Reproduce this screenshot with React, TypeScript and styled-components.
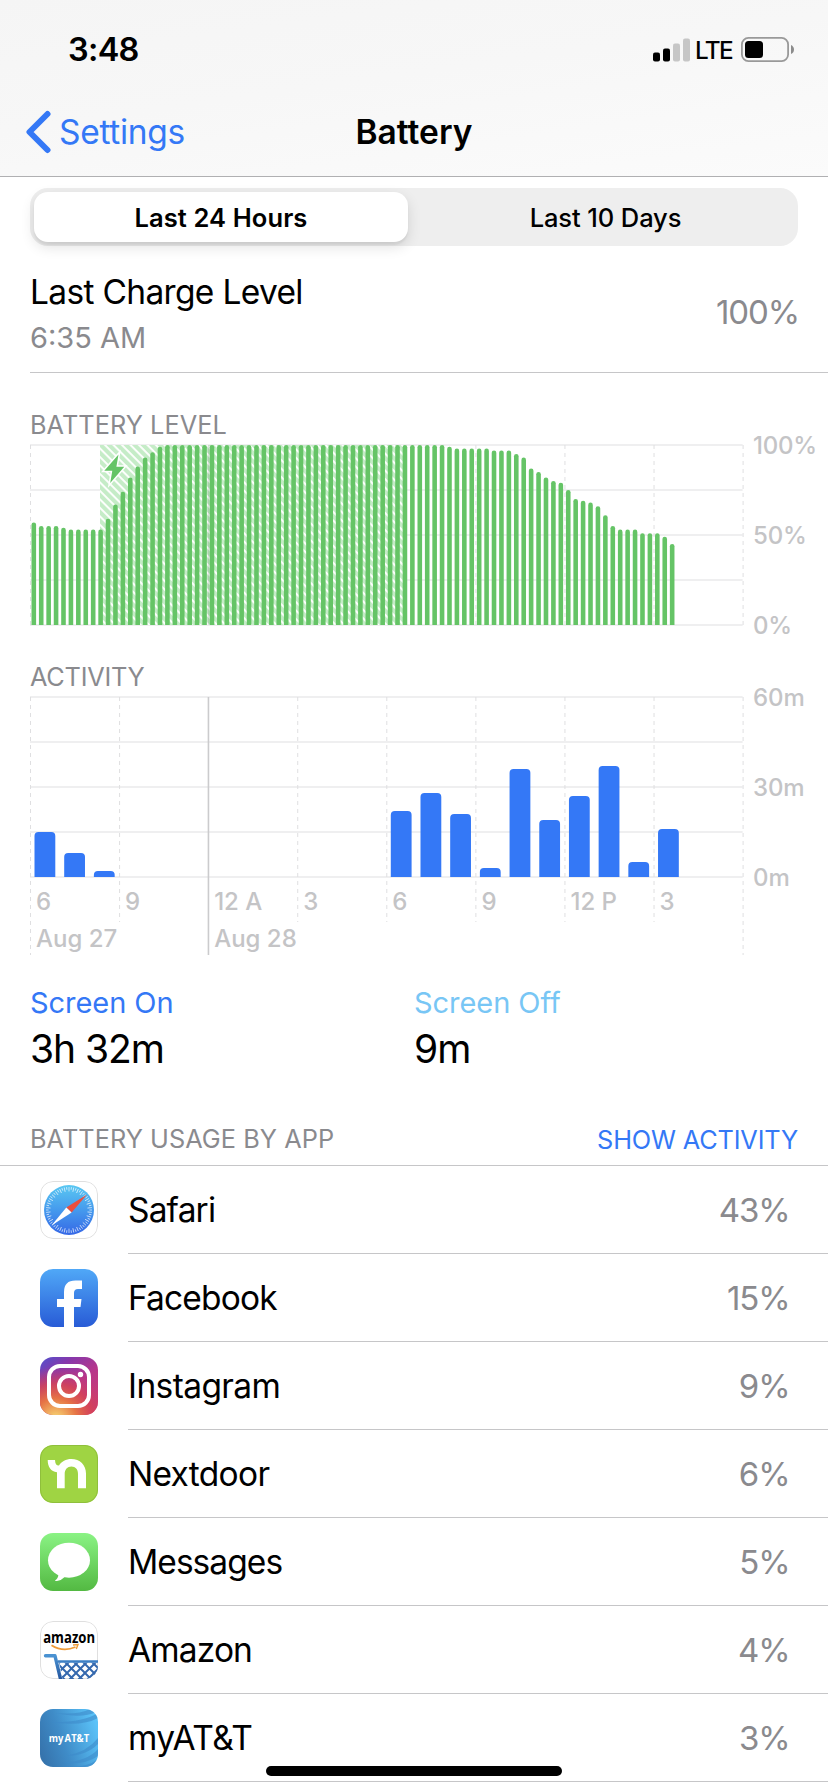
import React from 'react';
import styled, { createGlobalStyle } from 'styled-components';

const colors = {
  blue: '#3478f6',
  lightBlue: '#78c6f5',
  green: '#65c466',
  gray: '#8a8a8e',
  axis: '#c4c4c6',
  grid: '#efeff0',
  separator: '#c6c6c8',
};

const GlobalStyle = createGlobalStyle`
  * {
    box-sizing: border-box;
  }

  body {
    margin: 0;
    background: #fff;
    font-family: Inter, 'Liberation Sans', sans-serif;
    color: #000;
  }
`;

const Screen = styled.div`
  width: 828px;
  height: 1792px;
  overflow: hidden;
  position: relative;
  background: #fff;
`;

const Header = styled.header`
  height: 177px;
  background: linear-gradient(172deg, #f5f5f5 0%, #f7f7f7 45%, #fbfbfb 100%);
  border-bottom: 1px solid #b0b0b2;
`;

const StatusBar = styled.div`
  height: 88px;
  padding: 11px 34px 0 68px;
  display: flex;
  align-items: center;
  justify-content: space-between;
`;

const Time = styled.span`
  font-size: 32.5px;
  font-weight: 600;
  letter-spacing: -0.7px;
`;

const StatusIcons = styled.div`
  display: flex;
  align-items: center;
`;

const Carrier = styled.span`
  width: 50px;
  padding-left: 4px;
  font-size: 24.3px;
  font-weight: 500;
  letter-spacing: -1.7px;
`;

const NavBar = styled.nav`
  height: 88px;
  padding: 0 26px;
  display: grid;
  grid-template-columns: 1fr auto 1fr;
  align-items: center;
`;

const BackLink = styled.a`
  display: flex;
  align-items: center;
  gap: 8px;
  color: ${colors.blue};
  font-size: 33.5px;
  letter-spacing: -0.3px;
`;

const NavTitle = styled.h1`
  margin: 0;
  font-size: 33.5px;
  font-weight: 600;
`;

const Segments = styled.div`
  margin: 11px 30px 0;
  height: 58px;
  padding: 4px;
  display: grid;
  grid-template-columns: 374px 1fr;
  gap: 9px;
  border-radius: 18px;
  background: #eeeeee;
`;

const Segment = styled.button<{ $active?: boolean }>`
  border: 0;
  padding: 0;
  border-radius: 14px;
  font-family: inherit;
  font-size: 25.5px;
  color: #000;
  font-weight: ${({ $active }) => ($active ? 600 : 500)};
  letter-spacing: ${({ $active }) => ($active ? '0.1px' : '-0.1px')};
  background: ${({ $active }) => ($active ? '#fff' : 'transparent')};
  box-shadow: ${({ $active }) =>
    $active ? '0 5px 14px rgba(0, 0, 0, 0.12), 0 3px 2px rgba(0, 0, 0, 0.05)' : 'none'};
`;

const ChargeRow = styled.section`
  height: 127px;
  margin-left: 30px;
  padding: 5px 29px 0 0;
  display: flex;
  align-items: center;
  justify-content: space-between;
  border-bottom: 1px solid ${colors.separator};
`;

const ChargeInfo = styled.div`
  padding-top: 6px;
`;

const ChargeTitle = styled.div`
  font-size: 33.5px;
  line-height: 46px;
  letter-spacing: -0.67px;
`;

const ChargeTime = styled.div`
  font-size: 29px;
  line-height: 45px;
  color: ${colors.gray};
`;

const Value = styled.span`
  font-size: 33px;
  letter-spacing: -1.1px;
  color: ${colors.gray};
`;

const SectionLabel = styled.h2<{ $spacing?: number }>`
  margin: 0;
  font-size: 25.3px;
  font-weight: 400;
  line-height: 32px;
  letter-spacing: ${({ $spacing = 0.05 }) => $spacing}px;
  color: ${colors.gray};
`;

const ChartSection = styled.section<{ $top: number }>`
  padding: ${({ $top }) => $top}px 0 0 30px;
`;

const ChartSvg = styled.svg`
  display: block;
  overflow: visible;

  text {
    font-size: 24px;
    font-weight: 500;
    fill: ${colors.axis};
  }
`;

const Totals = styled.section`
  height: 112px;
  padding: 0 30px;
  display: grid;
  grid-template-columns: 1fr 1fr;
`;

const TotalLabel = styled.div<{ $color: string }>`
  font-size: 29px;
  line-height: 40px;
  letter-spacing: -0.05px;
  color: ${({ $color }) => $color};
`;

const TotalValue = styled.div`
  font-size: 39px;
  line-height: 51px;
  letter-spacing: -1.05px;
`;

const UsageHeader = styled.div`
  height: 70px;
  padding: 18px 30px 0;
  display: flex;
  align-items: center;
  justify-content: space-between;
`;

const ShowActivity = styled.a`
  font-size: 25.3px;
  letter-spacing: -0.15px;
  color: ${colors.blue};
`;

const AppList = styled.ul`
  margin: 0;
  padding: 0;
  list-style: none;
  border-top: 1px solid ${colors.separator};
`;

const AppRow = styled.li`
  height: 88px;
  padding-left: 40px;
  display: flex;
  align-items: center;
`;

const AppBody = styled.div`
  flex: 1;
  height: 88px;
  margin-left: 30px;
  padding-right: 38.5px;
  display: flex;
  align-items: center;
  justify-content: space-between;
  border-bottom: 1px solid ${colors.separator};
`;

const AppName = styled.span<{ $spacing: number }>`
  font-size: 33.5px;
  letter-spacing: ${({ $spacing }) => $spacing}px;
`;

const AppIcon = styled.svg`
  display: block;
  width: 58px;
  height: 58px;
  border-radius: 13px;
`;

const HomeIndicator = styled.div`
  position: absolute;
  left: 266px;
  bottom: 16px;
  width: 296px;
  height: 10px;
  border-radius: 5px;
  background: #000;
`;

const SignalIcon = () => (
  <svg width="38" height="24" viewBox="0 0 38 24">
    <rect x="0" y="14.5" width="7" height="9" rx="2" />
    <rect x="10" y="10.5" width="7" height="13" rx="2" />
    <rect x="20" y="5.5" width="7" height="18" rx="2" fill="#c6c6c6" />
    <rect x="30" y="0.5" width="7" height="23" rx="2" fill="#c6c6c6" />
  </svg>
);

const BatteryIcon = () => (
  <svg width="53" height="25" viewBox="0 0 53 25">
    <rect x="0.9" y="0.9" width="46.2" height="23.2" rx="6.5" fill="none" stroke="#999" strokeWidth="1.8" />
    <rect x="4" y="4" width="18" height="17" rx="3.5" />
    <path d="M50 8 Q53 9.5 53 12.5 Q53 15.5 50 17 Z" fill="#8c8c8c" />
  </svg>
);

const SafariIcon = () => (
  <AppIcon viewBox="0 0 58 58">
    <defs>
      <linearGradient id="safari" x1="0" y1="0" x2="0" y2="1">
        <stop offset="0" stopColor="#5ac8f2" />
        <stop offset="0.5" stopColor="#459aed" />
        <stop offset="1" stopColor="#3567e6" />
      </linearGradient>
    </defs>
    <rect x="0.5" y="0.5" width="57" height="57" rx="12.5" fill="#fff" stroke="#dfdfdf" />
    <circle cx="29" cy="29" r="25" fill="url(#safari)" />
    {Array.from({ length: 60 }, (_, i) => (
      <line
        key={i}
        x1="29"
        y1="6"
        x2="29"
        y2={i % 2 ? 8.6 : 10.4}
        stroke="#fff"
        strokeOpacity="0.8"
        strokeWidth="0.8"
        transform={`rotate(${i * 6} 29 29)`}
      />
    ))}
    <path d="M47 13.5 L26.3 26.4 L31.6 31.6 Z" fill="#ea4e3d" />
    <path d="M11.5 44.5 L26.3 26.4 L31.6 31.6 Z" fill="#fff" />
  </AppIcon>
);

const FacebookIcon = () => (
  <AppIcon viewBox="0 0 58 58">
    <defs>
      <linearGradient id="facebook" x1="0" y1="0" x2="0" y2="1">
        <stop offset="0" stopColor="#50a8f7" />
        <stop offset="1" stopColor="#285bd6" />
      </linearGradient>
    </defs>
    <rect width="58" height="58" fill="url(#facebook)" />
    <path
      d="M24 58 V38 H17 V30 H24 V23 Q24 11.5 35.5 11.5 H42 V20 H38 Q34 20 34 24 V30 H41.5 L40.5 38 H34 V58 Z"
      fill="#fff"
    />
  </AppIcon>
);

const InstagramIcon = () => (
  <AppIcon viewBox="0 0 58 58">
    <defs>
      <linearGradient id="insta" x1="0.1" y1="0" x2="0.9" y2="1">
        <stop offset="0" stopColor="#5a4dc8" />
        <stop offset="0.22" stopColor="#8538ac" />
        <stop offset="0.55" stopColor="#b8368a" />
        <stop offset="1" stopColor="#cf3f6c" />
      </linearGradient>
      <radialGradient id="instaWarm" cx="0.27" cy="1.08" r="0.92">
        <stop offset="0" stopColor="#f7d57c" />
        <stop offset="0.12" stopColor="#f3bf68" />
        <stop offset="0.4" stopColor="#e67445" />
        <stop offset="0.68" stopColor="#d64453" stopOpacity="0.8" />
        <stop offset="1" stopColor="#c8386f" stopOpacity="0" />
      </radialGradient>
    </defs>
    <rect width="58" height="58" fill="url(#insta)" />
    <rect width="58" height="58" fill="url(#instaWarm)" />
    <rect x="9" y="9" width="40" height="40" rx="11" fill="none" stroke="#fff" strokeWidth="4" />
    <circle cx="29" cy="29" r="10" fill="none" stroke="#fff" strokeWidth="4" />
    <circle cx="40.5" cy="17.5" r="2.7" fill="#fff" />
  </AppIcon>
);

const NextdoorIcon = () => (
  <AppIcon viewBox="0 0 58 58">
    <rect width="58" height="58" fill="#9fd443" />
    <rect x="0.5" y="0.5" width="57" height="57" rx="12.5" fill="none" stroke="#8fbf3c" />
    <path
      d="M7.7 15 H15 C15.2 19 16.5 20.7 19 20.5 C21.5 16.5 26 14 31.2 14 C40 14 46 20 46 28.5 V43.3 H38 V29 C38 24.3 35.5 21.5 31.4 21.5 C27.4 21.5 24.7 24.5 24.7 29 V43.3 H17 V27.3 C11 26.6 7.7 22 7.7 15 Z"
      fill="#fff"
    />
  </AppIcon>
);

const MessagesIcon = () => (
  <AppIcon viewBox="0 0 58 58">
    <defs>
      <linearGradient id="messages" x1="0" y1="0" x2="0" y2="1">
        <stop offset="0" stopColor="#8af384" />
        <stop offset="1" stopColor="#53b942" />
      </linearGradient>
    </defs>
    <rect width="58" height="58" fill="url(#messages)" />
    <ellipse cx="29" cy="27.2" rx="21" ry="17.5" fill="#fff" />
    <path d="M18.5 40 Q18.5 45.5 15 47.4 Q15.5 48.2 17 48 Q21.5 47.4 25 43.8 Z" fill="#fff" />
  </AppIcon>
);

const AmazonIcon = () => (
  <AppIcon viewBox="0 0 58 58">
    <defs>
      <linearGradient id="cart" x1="0" y1="0" x2="0" y2="1">
        <stop offset="0" stopColor="#4a92d2" />
        <stop offset="1" stopColor="#24569f" />
      </linearGradient>
      <pattern id="basket" width="9" height="9" x="18" y="43" patternUnits="userSpaceOnUse">
        <path d="M-1 -1 L10 10 M10 -1 L-1 10" stroke="#3468ae" strokeWidth="2" />
      </pattern>
    </defs>
    <rect x="0.5" y="0.5" width="57" height="57" rx="12.5" fill="#fff" stroke="#dfdfdf" />
    <text
      transform="translate(3.2 22.4) scale(0.83 1)"
      fontFamily="'Open Sans', sans-serif"
      fontWeight="700"
      fontSize="15.8"
    >
      amazon
    </text>
    <path d="M11.5 24.2 Q23 31.5 35.5 26" fill="none" stroke="#ee9b38" strokeWidth="1.8" />
    <path d="M33 24 L38 23.5 L36.3 28" fill="none" stroke="#ee9b38" strokeWidth="1.4" />
    <path d="M19 41.5 H58 V58 H22.5 Z" fill="url(#basket)" />
    <path d="M18 40.5 H58" stroke="#3c7fc4" strokeWidth="2.6" />
    <path d="M5.5 34.8 H15 L20.5 58" fill="none" stroke="url(#cart)" strokeWidth="3.4" strokeLinecap="round" strokeLinejoin="round" />
  </AppIcon>
);

const AttIcon = () => (
  <AppIcon viewBox="0 0 58 58">
    <defs>
      <linearGradient id="att" x1="0" y1="0.7" x2="1" y2="0.35">
        <stop offset="0" stopColor="#3674ad" />
        <stop offset="0.4" stopColor="#3f8cc8" />
        <stop offset="1" stopColor="#5ac2f8" />
      </linearGradient>
    </defs>
    <rect width="58" height="58" fill="url(#att)" />
    <g fill="#3d8aca" fillOpacity="0.6">
      <path d="M16 4 Q38 6 50 0 L56 3 Q42 10 16 4 Z" />
      <path d="M10 13 Q42 14 58 4 V9 Q42 18 10 13 Z" />
      <path d="M26 47 Q47 43 58 29 V35 Q46 47 26 47 Z" />
      <path d="M22 54 Q48 52 58 40 V47 Q46 56 22 54 Z" />
      <path d="M30 58 Q48 58 58 50 V58 Z" />
    </g>
    <text
      x="8.7"
      y="33"
      fill="#fff"
      fontFamily="'Open Sans', sans-serif"
      fontWeight="700"
      fontSize="11"
      wordSpacing="-1.4"
      textLength="40.5"
      lengthAdjust="spacingAndGlyphs"
    >
      my AT&amp;T
    </text>
  </AppIcon>
);

const apps = [
  { name: 'Safari', usage: '43%', spacing: -0.85, icon: <SafariIcon /> },
  { name: 'Facebook', usage: '15%', spacing: -0.85, icon: <FacebookIcon /> },
  { name: 'Instagram', usage: '9%', spacing: -0.6, icon: <InstagramIcon /> },
  { name: 'Nextdoor', usage: '6%', spacing: -0.7, icon: <NextdoorIcon /> },
  { name: 'Messages', usage: '5%', spacing: -0.95, icon: <MessagesIcon /> },
  { name: 'Amazon', usage: '4%', spacing: -0.85, icon: <AmazonIcon /> },
  { name: 'myAT&T', usage: '3%', spacing: -0.5, icon: <AttIcon /> },
];

// Battery charge, one sample every 15 minutes
const levels = [
  57, 55, 55, 55, 54, 53, 53, 53, 53, 53, 59, 67, 74, 82, 88, 93, 96, 99,
  ...Array(38).fill(100),
  99, 98, 98, 98, 98, 98, 97, 97, 97, 95, 93, 87, 85, 82, 80, 79, 75, 70, 69, 68, 66, 61, 55, 53, 53, 53, 51, 51, 51, 49, 45,
];

// Minutes of activity in each hour
const minutes = [15, 8, 2, 0, 0, 0, 0, 0, 0, 0, 0, 0, 22, 28, 21, 3, 36, 19, 27, 37, 5, 16];

const hours = ['6', '9', '12 A', '3', '6', '9', '12 P', '3'];

const PLOT_WIDTH = 712.6;
const PLOT_HEIGHT = 180;
const HOUR = PLOT_WIDTH / 24;
const QUARTER = HOUR / 4;

const Grid = ({ drops }: { drops?: boolean }) => (
  <>
    {[0, 45, 90, 135, 180].map((y) => (
      <line key={y} x1={0} x2={PLOT_WIDTH} y1={y} y2={y} stroke={colors.grid} strokeWidth="2" />
    ))}
    {Array.from({ length: 9 }, (_, i) => {
      const day = i === 0 || i === 8;
      const end = drops ? (day ? 258 : 225) : PLOT_HEIGHT;
      return i === 2 ? null : (
        <line
          key={i}
          x1={i * 3 * HOUR + 0.5}
          x2={i * 3 * HOUR + 0.5}
          y1={0}
          y2={end}
          stroke="#dfdfe1"
          strokeWidth="1"
          strokeDasharray="4 4"
        />
      );
    })}
  </>
);

const BatteryChart = () => (
  <ChartSvg width="798" height="216" viewBox="0 -4 798 216">
    <defs>
      <pattern id="charging" width="6" height="6" patternUnits="userSpaceOnUse" patternTransform="rotate(45)">
        <rect width="6" height="6" fill="#c5ecc7" />
        <rect width="6" height="1.9" fill="#fff" />
      </pattern>
    </defs>
    <Grid />
    <rect x="70" y="0" width="305" height="180" fill="url(#charging)" />
    {levels.map((level, i) => {
      const x = i * QUARTER + 1.5;
      const y = PLOT_HEIGHT * (1 - level / 100);
      return (
        <path
          key={i}
          d={`M${x} 180 V${y + 2.3} a2.3 2.3 0 0 1 4.6 0 V180 Z`}
          fill={colors.green}
        />
      );
    })}
    <line x1={6 * HOUR + 0.3} x2={6 * HOUR + 0.3} y1={0} y2={180} stroke="#000" strokeOpacity="0.12" strokeWidth="1.4" />
    <path
      d="M88.5 9.5 L74.3 25.8 H82.3 L80.2 38 L94.3 21.7 H86.4 Z"
      fill={colors.green}
      stroke="#fff"
      strokeWidth="3"
      paintOrder="stroke"
    />
    <text x="723" y="9.3" letterSpacing="-0.2">100%</text>
    <text x="723" y="99.3" letterSpacing="-0.2">50%</text>
    <text x="723" y="189.3" letterSpacing="-0.2">0%</text>
  </ChartSvg>
);

const ActivityChart = () => (
  <ChartSvg width="798" height="290" viewBox="0 -4 798 290">
    <Grid drops />
    <line x1={6 * HOUR + 0.3} x2={6 * HOUR + 0.3} y1={0} y2={258} stroke="#cbcbcd" strokeWidth="1.6" />
    {minutes.map((value, i) => {
      const x = i * HOUR + 4.5;
      const y = PLOT_HEIGHT * (1 - value / 60);
      return value ? (
        <path
          key={i}
          d={`M${x} 180 V${y + 4} q0 -4 4 -4 h12.8 q4 0 4 4 V180 Z`}
          fill={colors.blue}
        />
      ) : null;
    })}
    {hours.map((hour, i) => (
      <text key={i} x={i * 3 * HOUR + 6} y="213">{hour}</text>
    ))}
    <text x="6" y="250">Aug 27</text>
    <text x={6 * HOUR + 6} y="250">Aug 28</text>
    <text x="723" y="9.3" letterSpacing="-0.1">60m</text>
    <text x="723" y="99.3" letterSpacing="-0.1">30m</text>
    <text x="723" y="189.3" letterSpacing="-0.1">0m</text>
  </ChartSvg>
);

export default function App() {
  return (
    <Screen>
      <GlobalStyle />
      <Header>
        <StatusBar>
          <Time>3:48</Time>
          <StatusIcons>
            <SignalIcon />
            <Carrier>LTE</Carrier>
            <BatteryIcon />
          </StatusIcons>
        </StatusBar>
        <NavBar>
          <BackLink>
            <svg width="25" height="44" viewBox="0 0 25 44">
              <path
                d="M21.5 4 L3.5 22 L21.5 40"
                fill="none"
                stroke={colors.blue}
                strokeWidth="6"
                strokeLinecap="round"
                strokeLinejoin="round"
              />
            </svg>
            Settings
          </BackLink>
          <NavTitle>Battery</NavTitle>
        </NavBar>
      </Header>

      <Segments>
        <Segment $active>Last 24 Hours</Segment>
        <Segment>Last 10 Days</Segment>
      </Segments>

      <ChargeRow>
        <ChargeInfo>
          <ChargeTitle>Last Charge Level</ChargeTitle>
          <ChargeTime>6:35 AM</ChargeTime>
        </ChargeInfo>
        <Value>100%</Value>
      </ChargeRow>

      <ChartSection $top={36}>
        <SectionLabel>BATTERY LEVEL</SectionLabel>
        <BatteryChart />
      </ChartSection>
      <ChartSection $top={4}>
        <SectionLabel $spacing={-0.25}>ACTIVITY</SectionLabel>
        <ActivityChart />
      </ChartSection>

      <Totals>
        <div>
          <TotalLabel $color={colors.blue}>Screen On</TotalLabel>
          <TotalValue>3h 32m</TotalValue>
        </div>
        <div>
          <TotalLabel $color={colors.lightBlue}>Screen Off</TotalLabel>
          <TotalValue>9m</TotalValue>
        </div>
      </Totals>

      <UsageHeader>
        <SectionLabel>BATTERY USAGE BY APP</SectionLabel>
        <ShowActivity>SHOW ACTIVITY</ShowActivity>
      </UsageHeader>
      <AppList>
        {apps.map((app) => (
          <AppRow key={app.name}>
            {app.icon}
            <AppBody>
              <AppName $spacing={app.spacing}>{app.name}</AppName>
              <Value>{app.usage}</Value>
            </AppBody>
          </AppRow>
        ))}
      </AppList>
      <HomeIndicator />
    </Screen>
  );
}
